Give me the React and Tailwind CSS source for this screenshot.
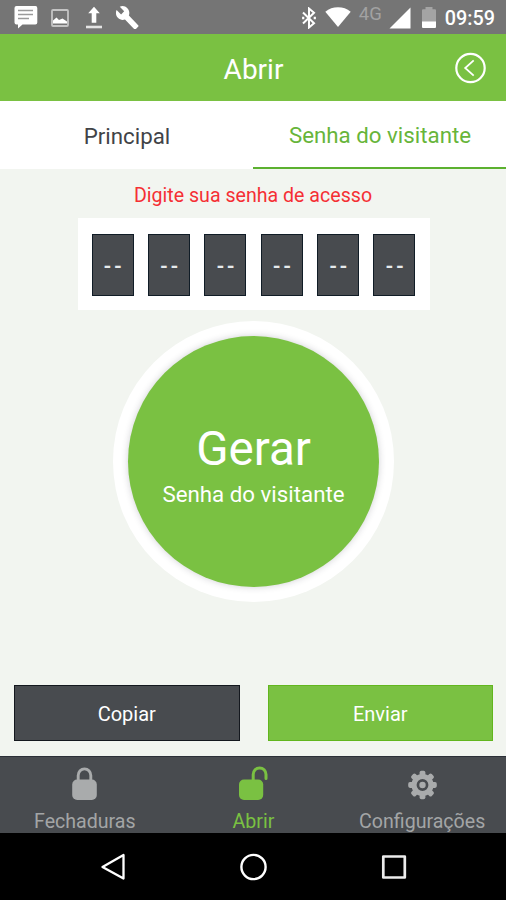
import React, { useState } from 'react';

const DIGITS = ['--', '--', '--', '--', '--', '--'];

const StatusBar = () => (
    <div className="h-[34px] shrink-0 bg-[#757575] flex items-center justify-between pl-3.5 pr-[11px] text-white">
        <div className="flex items-center">
            {/* message */}
            <svg className="w-6 h-6" viewBox="0 0 24 24" fill="none">
                <path d="M2.5 1h19Q23.300 1 23.300 3v14.500Q23.300 19.500 21.300 19.500H8.500L4 23.500V19.500H2.500Q.5 19.500 .5 17.500V3Q.5 1 2.500 1Z" fill="white" />
                <path d="M4 5.600h15M4 9.600h15M4 13.600h11" stroke="#9a9a9a" strokeWidth="1.500" />
            </svg>
            {/* picture */}
            <svg className="w-[18px] h-[18px] ml-[13px] mt-0.5" viewBox="0 0 18 18">
                <rect x="1" y="1" width="16" height="16" rx="1" fill="none" stroke="#c4c4c4" strokeWidth="1.800" />
                <path d="M2 14.500v-3l3.500-3 2.500 2.500 3.500-1.500 4.500 3v2Z" fill="white" />
            </svg>
            {/* upload */}
            <svg className="w-[18px] h-[23px] ml-4 mt-px" viewBox="0 0 18 23">
                <path d="M9 .8l5.800 6.400H11.300V16.800H6.700V7.200H3.200Z" fill="white" />
                <path d="M1 21h16" stroke="#e4e4e4" strokeWidth="2.600" />
            </svg>
            {/* wrench */}
            <svg className="w-[23px] h-[23px] ml-[13px] mt-px" viewBox="1 1 22.500 21.500" preserveAspectRatio="none">
                <path fill="white" d="M22.700 19l-9.100-9.100c.9-2.300.4-5-1.500-6.900-2-2-5-2.400-7.400-1.300L9 6 6 9 1.600 4.700C.4 7.100.9 10.100 2.900 12.100c1.900 1.900 4.600 2.400 6.900 1.500l9.100 9.100c.4.4 1 .4 1.400 0l2.300-2.300c.5-.4.5-1.100.1-1.400z" />
            </svg>
        </div>
        <div className="flex items-center">
            {/* bluetooth */}
            <svg className="w-4 h-[22px] mt-px" viewBox="0 0 16 22" fill="none" stroke="white" strokeWidth="2">
                <path d="M2 5.500l11 10.800-5 4.200V1.500l5 4.200L2 16.500" />
                <path d="M2.200 9.800v2.400M13.800 9.800v2.400" strokeWidth="2.200" />
            </svg>
            {/* wifi */}
            <svg className="w-[26px] h-[20px] ml-2" viewBox="0 0 26 20">
                <path d="M13 20L.3 4.700Q5.800 .3 13 .3T25.700 4.700Z" fill="white" />
            </svg>
            <span className="ml-2 w-6 -mt-[7px] text-[18.500px] leading-5 text-[#a2a2a2]">4G</span>
            {/* signal */}
            <svg className="w-[22px] h-[22px] ml-1.5 mt-px" viewBox="0 0 22 22">
                <path d="M21.500 .5V21.500H.5Z" fill="white" />
            </svg>
            {/* battery */}
            <svg className="w-[14px] h-[21px] ml-[11px] mt-px" viewBox="0 0 14 21">
                <path d="M3.500 0h7v2.200H13q1 0 1 1V15H0V3.200q0-1 1-1h2.500Z" fill="#a4a4a4" />
                <path d="M0 14.600h14V20q0 1-1 1H1q-1 0-1-1Z" fill="white" />
            </svg>
            <span className="ml-[9px] mt-[3px] text-[19.800px] leading-6 font-medium">09:59</span>
        </div>
    </div>
);

const Header = ({ title }) => (
    <div className="h-[67px] shrink-0 bg-[#7ac142] grid grid-cols-[1fr_auto_1fr] items-center text-white">
        <span />
        <h1 className="text-[28px] leading-8 mt-1 ml-px">{title}</h1>
        <button type="button" className="justify-self-end mr-5 mt-px">
            <svg className="w-8 h-8" viewBox="0 0 32 32" fill="none" stroke="white">
                <circle cx="16.500" cy="16" r="14.200" strokeWidth="2.200" />
                <path d="M19.700 8.300L11.200 16l8.500 7.700" strokeWidth="1.800" />
            </svg>
        </button>
    </div>
);

const ActionButton = ({ className, children }) => (
    <button type="button" className={`h-14 flex-1 border text-white text-[20px] leading-6 pt-0.5 ${className}`}>
        {children}
    </button>
);

const LockIcon = () => (
    <svg className="w-9 h-9" viewBox="0 0 36 36">
        <path d="M12.200 16V9.600a6.300 6.700 0 0 1 12.600 0V16" fill="none" stroke="#a9abac" strokeWidth="2.900" />
        <rect x="6.200" y="13.600" width="24.600" height="20.300" rx="5" fill="#a9abac" />
    </svg>
);

const UnlockIcon = () => (
    <svg className="w-9 h-9" viewBox="0 0 36 36">
        <path d="M18.200 15V8.500a6.300 6.500 0 0 1 12.800 0v4" fill="none" stroke="#7ac142" strokeWidth="3" strokeLinecap="round" />
        <rect x="4" y="13.600" width="24.200" height="20.300" rx="5" fill="#7ac142" />
    </svg>
);

const TEETH = [0, 45, 90, 135, 180, 225, 270, 315];

const GearIcon = () => (
    <svg className="w-9 h-9" viewBox="0 0 36 36">
        <circle cx="18.500" cy="19" r="8.500" fill="none" stroke="#a9abac" strokeWidth="5.200" />
        {TEETH.map((deg) => (
            <rect key={deg} x="15.600" y="4.700" width="5.800" height="6" rx="1.800" fill="#a9abac" transform={`rotate(${deg} 18.500 19)`} />
        ))}
        <circle cx="18.500" cy="19" r="3.200" fill="#a9abac" />
    </svg>
);

const NAV = [
    { id: 'locks', label: 'Fechaduras', Icon: LockIcon },
    { id: 'open', label: 'Abrir', Icon: UnlockIcon },
    { id: 'settings', label: 'Configurações', Icon: GearIcon },
];

const BottomNav = ({ active }) => (
    <div className="h-[77px] shrink-0 bg-[#484b4f] border-t border-[#2c3038] grid grid-cols-3 text-[19.600px]">
        {NAV.map(({ id, label, Icon }) => (
            <button key={id} type="button" className={`flex flex-col items-center pt-[9px] ${id === active ? 'text-[#7ac142]' : 'text-[#a3a5a6]'}`}>
                <Icon />
                <span className="leading-6 mt-2 pl-px">{label}</span>
            </button>
        ))}
    </div>
);

const SystemNav = () => (
    <div className="h-[67px] shrink-0 bg-black flex items-center justify-center gap-[112px]">
        <svg className="w-7 h-7" viewBox="0 0 28 28" fill="none" stroke="white" strokeWidth="2.300" strokeLinejoin="round">
            <path d="M24.500 2V25.500L3.500 13.900Z" />
        </svg>
        <svg className="w-7 h-7" viewBox="0 0 28 28" fill="none" stroke="white" strokeWidth="2.400">
            <circle cx="14.500" cy="14" r="12.100" />
        </svg>
        <svg className="w-7 h-7" viewBox="0 0 28 28" fill="none" stroke="#ececec" strokeWidth="2.700" strokeLinejoin="round">
            <rect x="4.300" y="3.500" width="21.500" height="21" />
        </svg>
    </div>
);

const App = () => {
    const [tab, setTab] = useState('visitor');

    return (
        <div className="w-[506px] h-[900px] flex flex-col overflow-hidden bg-[#f2f5f0] font-['Roboto',sans-serif]">
            <StatusBar />
            <Header title="Abrir" />

            <div className="h-[68px] shrink-0 bg-white grid grid-cols-2 text-[22.300px] leading-7">
                <button
                    type="button"
                    onClick={() => setTab('main')}
                    className={`pt-0.5 pl-px ${tab === 'main' ? 'border-b-2 border-[#5cb130] text-[#67b53a]' : 'text-[#414347]'}`}
                >
                    Principal
                </button>
                <button
                    type="button"
                    onClick={() => setTab('visitor')}
                    className={`pt-px pl-px ${tab === 'visitor' ? 'border-b-2 border-[#5cb130] text-[#67b53a]' : 'text-[#414347]'}`}
                >
                    Senha do visitante
                </button>
            </div>

            <div className="flex-1 flex flex-col items-center">
                <p className="mt-[15px] text-[19.600px] leading-6 text-[#f52f34]">Digite sua senha de acesso</p>

                <div className="mt-2.5 ml-px w-[352px] h-[92px] shrink-0 bg-white flex items-center justify-between px-3.5 pt-px">
                    {DIGITS.map((digit, i) => (
                        <div key={i} className="w-[42px] h-[62px] bg-[#484b4f] border border-[#101c26] flex items-center justify-center text-[#e6eaec] text-[20px] font-bold leading-none tracking-[2.500px] pl-[3px] pt-0.5">
                            {digit}
                        </div>
                    ))}
                </div>

                {/* Generate button */}
                <div className="mt-[11px] ml-px w-[281px] h-[281px] shrink-0 rounded-full bg-white flex items-center justify-center">
                    <button type="button" className="w-[251px] h-[251px] rounded-full bg-[#7ac142] text-white flex flex-col items-center justify-center pt-2 shadow-[0_0_7px_rgba(40,40,60,0.22)]">
                        <span className="text-[47.500px] leading-[52px]">Gerar</span>
                        <span className="text-[22.300px] leading-7 mt-[5px]">Senha do visitante</span>
                    </button>
                </div>

                <div className="mt-auto mb-[15px] w-full pl-3.5 pr-[13px] flex gap-7">
                    <ActionButton className="bg-[#484b4f] border-[#14181e]">Copiar</ActionButton>
                    <ActionButton className="bg-[#7ac142] border-[#62b61e]">Enviar</ActionButton>
                </div>
            </div>

            <BottomNav active="open" />
            <SystemNav />
        </div>
    );
};

export default App;
